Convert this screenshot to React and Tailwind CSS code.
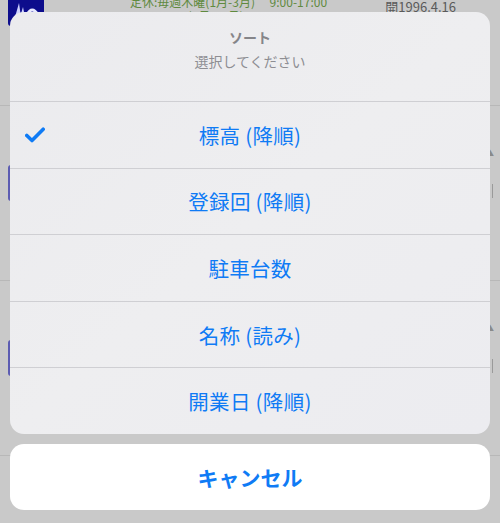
import React from "react";

function Check() {
  return (
    <svg width="20" height="16" viewBox="0 0 20 16" className="absolute left-[15px] top-1/2 -translate-y-1/2">
      <polyline points="1.8,8.5 7,13.5 18.2,2.2" fill="none" stroke="#0f7bf5" strokeWidth="3.6" strokeLinecap="round" strokeLinejoin="round" />
    </svg>
  );
}

function BgRow({ logo, first, noLogo }) {
  return (
    <div className="relative h-[175px] shrink-0 border-b border-[#b8b8b8] flex items-start pt-[59px] pl-[8px]">
      {!noLogo && (
        <div className={`w-[36px] h-[36px] rounded-[3px] ${logo} flex items-center justify-center`}>
          {first && (
            <svg width="30" height="30" viewBox="0 0 30 30">
              <path d="M4 24 L8 10 L10 24 Z M9 24 L12 14 L14 24 Z" fill="#cfd3ff" />
              <path d="M16 22 Q21 12 27 22" stroke="#e8eaff" strokeWidth="3" fill="none" />
            </svg>
          )}
        </div>
      )}
      {first && (
        <div className="ml-[86px] mt-[6px] text-[12px] leading-[12px] text-[#5f8a3f] font-['Noto_Sans_CJK_JP',sans-serif]">
          <div className="whitespace-nowrap">定休:毎週木曜(1月-3月)　 9:00-17:00</div>
          <div className="whitespace-nowrap mt-[2px]">9:00-18:00(4月-12月)</div>
        </div>
      )}
      {first && (
        <div className="ml-auto mt-[10px] text-[13px] leading-[13px] text-[#5a5a5a] font-['Noto_Sans_CJK_JP',sans-serif] whitespace-nowrap">
          開1996.4.16
        </div>
      )}
      {first && (
        <div className="ml-[14px] mr-[14px] mt-[77px] w-[16px] h-[18px] rounded-[3px] border border-[#8a8a8a]" />
      )}
      {!first && !noLogo && (
        <div className="absolute right-[6px] top-[41px] text-[8px] text-[#8a8a8a]">▲</div>
      )}
      {!first && !noLogo && (
        <div className="absolute right-[7px] top-[78px] w-[1px] h-[14px] bg-[#9a9a9a]" />
      )}
    </div>
  );
}

export default function App() {
  const rows = ["標高 (降順)", "登録回 (降順)", "駐車台数", "名称 (読み)", "開業日 (降順)"];
  return (
    <div className="relative w-[500px] h-[523px] overflow-hidden bg-[#c9c9c9] font-['Noto_Sans_CJK_JP',sans-serif]">
      <div className="flex flex-col -mt-[69px]">
        <BgRow logo="bg-[#0d0d8c]" first />
        <BgRow logo="bg-[#5c5cb2]" />
        <BgRow logo="bg-[#5c5cb2]" />
        <BgRow noLogo />
      </div>

      <div className="absolute inset-0 flex flex-col px-[10px] pt-[12px] pb-[13px]">
        <div className="h-[422px] flex flex-col rounded-[14px] overflow-hidden bg-gradient-to-br from-[#ebebee] via-[#eeeef0] to-[#ececf0]">
          <div className="h-[89px] shrink-0 flex flex-col items-center pt-[16px]">
            <div className="text-[14px] leading-[19px] font-semibold text-[#858589]">ソート</div>
            <div className="mt-[5px] text-[14px] leading-[19px] text-[#8e8e93]">選択してください</div>
          </div>
          {rows.map((r, i) => (
            <div key={r} className="relative flex-1 border-t border-[#cfcfd3] flex items-center justify-center">
              {i === 0 && <Check />}
              <span className="text-[20.5px] leading-[24px] text-[#0f7bf5] tracking-[0.3px]">{r}</span>
            </div>
          ))}
        </div>
        <div className="mt-[10px] h-[66px] rounded-[14px] bg-white flex items-center justify-center">
          <span className="text-[21px] leading-[24px] font-bold text-[#0f7bf5]">キャンセル</span>
        </div>
      </div>
    </div>
  );
}
